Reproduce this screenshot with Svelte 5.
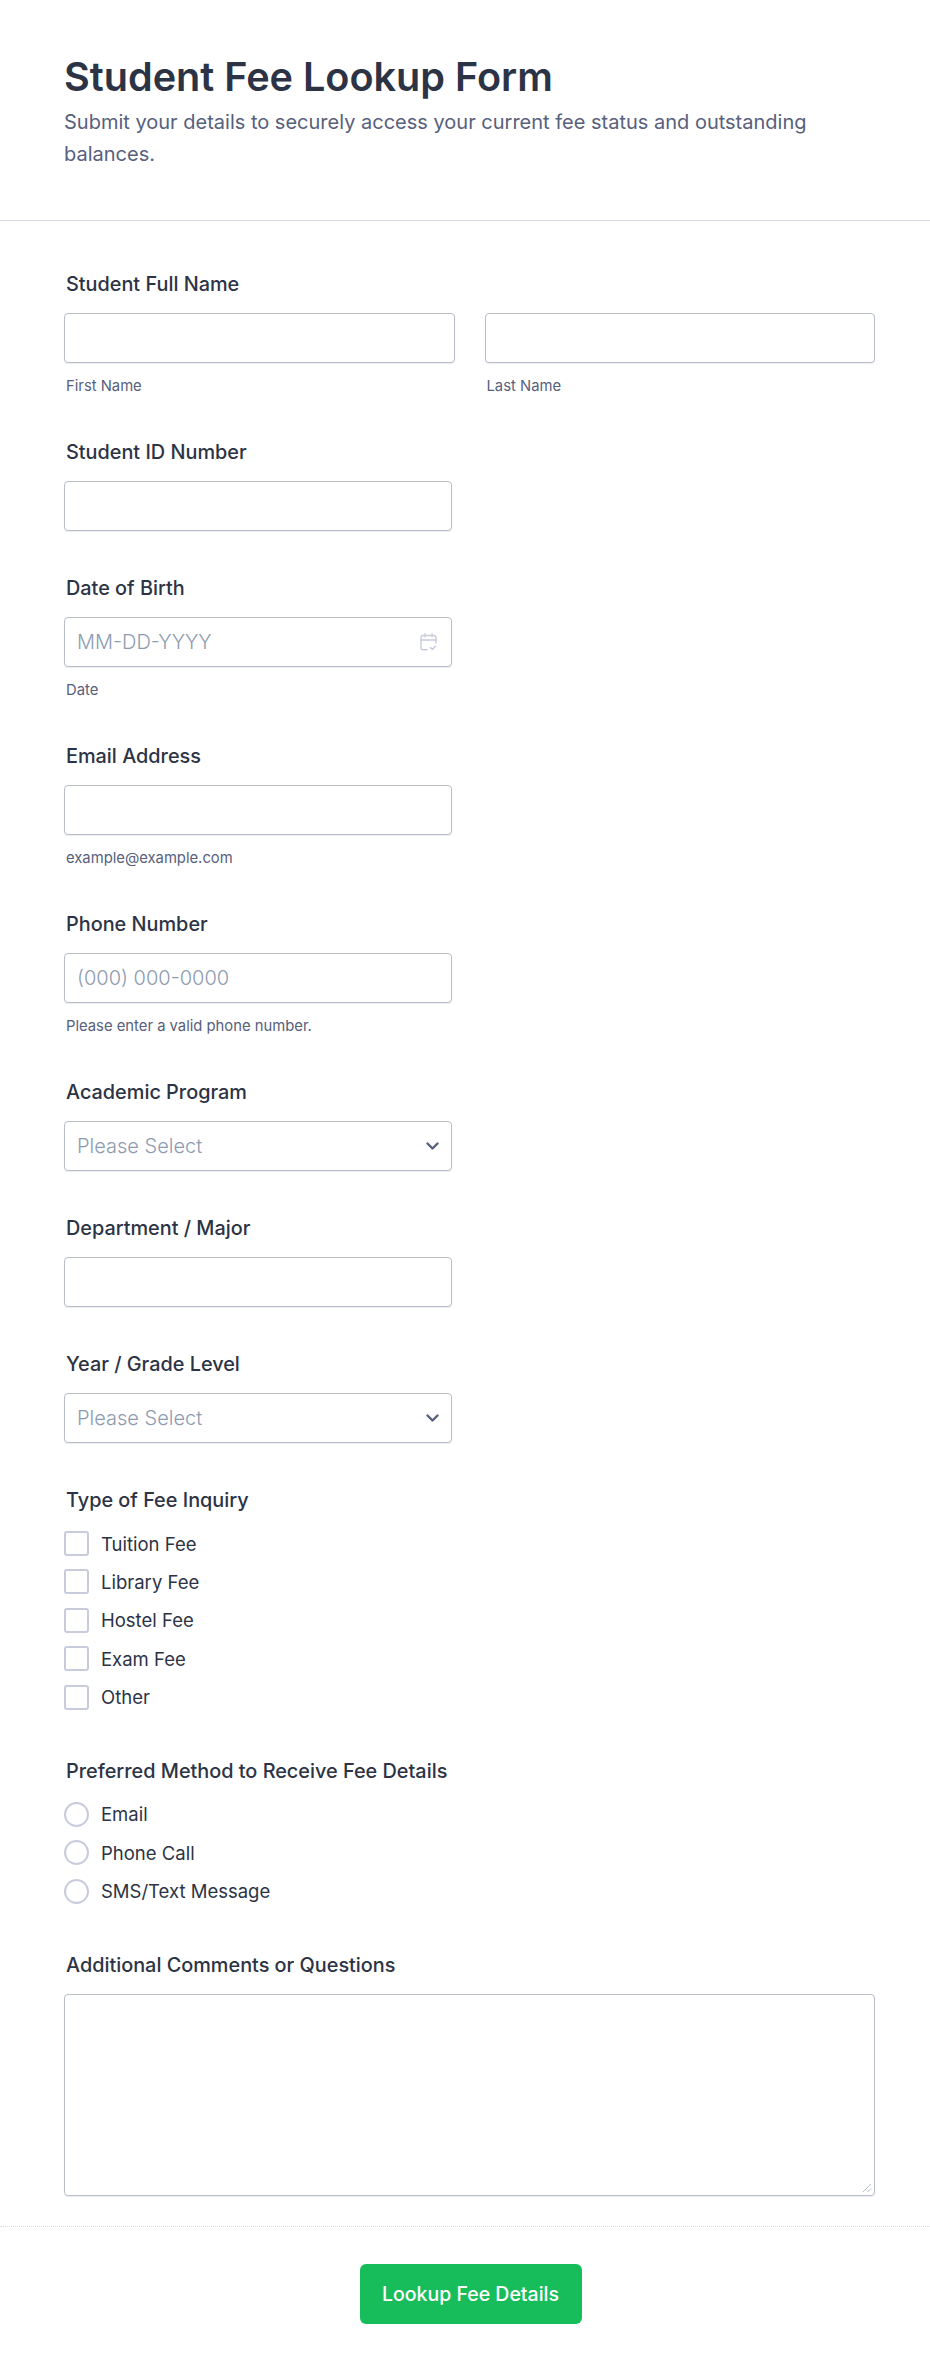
<script>
  const checks = ['Tuition Fee', 'Library Fee', 'Hostel Fee', 'Exam Fee', 'Other'];
  const radios = ['Email', 'Phone Call', 'SMS/Text Message'];
</script>

<div class="page">
  <header class="head">
    <h1>Student Fee Lookup Form</h1>
    <p>Submit your details to securely access your current fee status and outstanding balances.</p>
  </header>

  <form class="form">
    <div class="field">
      <div class="label">Student Full Name</div>
      <div class="row">
        <div class="col">
          <input class="box wide" type="text" />
          <div class="sub">First Name</div>
        </div>
        <div class="col">
          <input class="box wide" type="text" />
          <div class="sub">Last Name</div>
        </div>
      </div>
    </div>

    <div class="field">
      <div class="label">Student ID Number</div>
      <input class="box" type="text" />
    </div>

    <div class="field">
      <div class="label">Date of Birth</div>
      <div class="wrap">
        <input class="box" type="text" placeholder="MM-DD-YYYY" />
        <svg class="cal" viewBox="0 0 17 18" fill="none" stroke="#c8cbdb" stroke-width="1.4" stroke-linecap="round" stroke-linejoin="round">
          <path d="M7 16.8H3A2 2 0 0 1 1 14.8V4.5A2 2 0 0 1 3 2.5h11a2 2 0 0 1 2 2V10" />
          <path d="M1 7h15M5 .8v3M12 .8v3" />
          <path d="M10.5 14.6l1.8 1.8 3.2-3.2" />
        </svg>
      </div>
      <div class="sub">Date</div>
    </div>

    <div class="field">
      <div class="label">Email Address</div>
      <input class="box" type="text" />
      <div class="sub">example@example.com</div>
    </div>

    <div class="field">
      <div class="label">Phone Number</div>
      <input class="box" type="text" placeholder="(000) 000-0000" />
      <div class="sub">Please enter a valid phone number.</div>
    </div>

    <div class="field">
      <div class="label">Academic Program</div>
      <div class="box select">
        <span>Please Select</span>
        <svg class="chev" viewBox="0 0 13 8" fill="none" stroke="#57607c" stroke-width="2.4" stroke-linecap="round" stroke-linejoin="round"><path d="M1.5 1.5 6.5 6.5l5-5" /></svg>
      </div>
    </div>

    <div class="field">
      <div class="label">Department / Major</div>
      <input class="box" type="text" />
    </div>

    <div class="field">
      <div class="label">Year / Grade Level</div>
      <div class="box select">
        <span>Please Select</span>
        <svg class="chev" viewBox="0 0 13 8" fill="none" stroke="#57607c" stroke-width="2.4" stroke-linecap="round" stroke-linejoin="round"><path d="M1.5 1.5 6.5 6.5l5-5" /></svg>
      </div>
    </div>

    <div class="field">
      <div class="label">Type of Fee Inquiry</div>
      <div class="options">
        {#each checks as c}
          <label class="opt"><span class="tick"></span>{c}</label>
        {/each}
      </div>
    </div>

    <div class="field">
      <div class="label">Preferred Method to Receive Fee Details</div>
      <div class="options">
        {#each radios as r}
          <label class="opt"><span class="tick round"></span>{r}</label>
        {/each}
      </div>
    </div>

    <div class="field last">
      <div class="label">Additional Comments or Questions</div>
      <div class="area">
        <svg class="grip" viewBox="0 0 10 10" stroke="#b8bdc9" stroke-width="1"><path d="M1 9 9 1M5.5 9 9 5.5" /></svg>
      </div>
    </div>
  </form>

  <footer class="foot">
    <button type="button" class="submit">Lookup Fee Details</button>
  </footer>
</div>

<style>
  :global(body) {
    margin: 0;
    background: #fff;
  }
  .page {
    width: 930px;
    height: 2373px;
    font-family: Inter, "Liberation Sans", sans-serif;
    color: #2c3345;
    box-sizing: border-box;
    overflow: hidden;
  }
  .head {
    box-sizing: border-box;
    height: 221px;
    padding: 53px 64px 0;
    border-bottom: 1px solid #d9dae6;
  }
  h1 {
    margin: 0;
    font-size: 39.6px;
    line-height: 48px;
    font-weight: 600;
    color: #2c3345;
  }
  .head p {
    margin: 5px 0 0;
    font-size: 20px;
    line-height: 32px;
    color: #57607c;
  }
  .form {
    padding: 50px 55px 0 64px;
  }
  .field {
    margin-bottom: 44px;
  }
  .field.last {
    margin-bottom: 0;
  }
  .label {
    margin-left: 2px;
    font-size: 19.85px;
    line-height: 26px;
    font-weight: 500;
    color: #2c3345;
    margin-bottom: 16px;
  }
  .row {
    display: flex;
    gap: 30px;
    width: 811px;
  }
  .col {
    flex: 1;
  }
  .box {
    display: block;
    box-sizing: border-box;
    width: 388px;
    height: 50px;
    padding: 0 12px;
    border: 1px solid #b8bdc9;
    border-radius: 4px;
    background: #fff;
    font-family: inherit;
    font-size: 20px;
    font-weight: 300;
    color: #2c3345;
    box-shadow: 0 1px 1px rgba(184, 189, 201, 0.3);
  }
  .box.wide {
    width: 100%;
  }
  .box::placeholder {
    color: #8d9bb0;
    opacity: 1;
  }
  .sub {
    margin: 13px 0 -1px 2px;
    font-size: 14.8px;
    line-height: 20px;
    color: #57607c;
  }
  .wrap {
    position: relative;
    width: 388px;
  }
  .cal {
    position: absolute;
    right: 15px;
    top: 16px;
    width: 17px;
    height: 18px;
  }
  .select {
    display: flex;
    align-items: center;
    justify-content: space-between;
    color: #8d9bb0;
  }
  .chev {
    width: 13px;
    height: 8px;
  }
  .options {
    display: flex;
    flex-direction: column;
    gap: 13.4px;
    padding: 2px 0 4.4px;
  }
  .opt {
    display: flex;
    align-items: center;
    height: 25px;
    font-size: 18.5px;
    color: #2c3345;
  }
  .tick {
    box-sizing: border-box;
    width: 25px;
    height: 25px;
    margin-right: 12px;
    flex: none;
    border: 2px solid #c8cbdb;
    border-radius: 3px;
    background: #fff;
  }
  .tick.round {
    border-radius: 50%;
  }
  .area {
    position: relative;
    box-sizing: border-box;
    width: 811px;
    height: 202px;
    border: 1px solid #b8bdc9;
    border-radius: 4px;
    box-shadow: 0 1px 1px rgba(184, 189, 201, 0.3);
  }
  .grip {
    position: absolute;
    right: 2px;
    bottom: 2px;
    width: 10px;
    height: 10px;
  }
  .foot {
    margin-top: 30px;
    border-top: 1px dotted #d9dae6;
    display: flex;
    justify-content: center;
    padding-top: 37px;
  }
  .submit {
    width: 222px;
    height: 60px;
    border: 0;
    border-radius: 6px;
    background: #18bd5b;
    color: #fff;
    font-family: inherit;
    font-size: 19.5px;
    font-weight: 500;
    margin-left: 11px;
  }
</style>
